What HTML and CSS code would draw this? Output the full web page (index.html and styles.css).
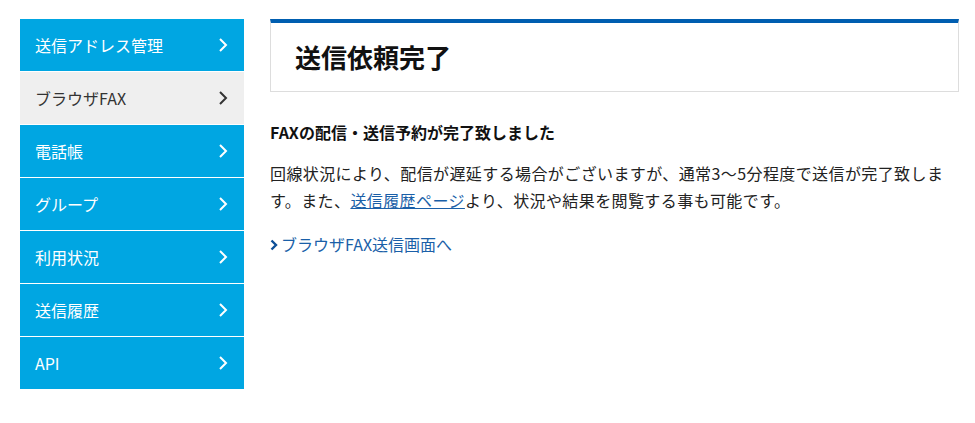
FILE: index.html
```html
<!DOCTYPE html>
<html lang="ja">
<head>
<meta charset="utf-8">
<title>送信依頼完了</title>
<link rel="stylesheet" href="styles.css">
</head>
<body>
<div class="page">
  <nav class="side">
    <a class="item" href="#"><span>送信アドレス管理</span><svg class="chev" viewBox="0 0 10 16" width="10" height="16"><path d="M2 2 L8 8 L2 14" /></svg></a>
    <a class="item active" href="#"><span>ブラウザFAX</span><svg class="chev" viewBox="0 0 10 16" width="10" height="16"><path d="M2 2 L8 8 L2 14" /></svg></a>
    <a class="item" href="#"><span>電話帳</span><svg class="chev" viewBox="0 0 10 16" width="10" height="16"><path d="M2 2 L8 8 L2 14" /></svg></a>
    <a class="item" href="#"><span>グループ</span><svg class="chev" viewBox="0 0 10 16" width="10" height="16"><path d="M2 2 L8 8 L2 14" /></svg></a>
    <a class="item" href="#"><span>利用状況</span><svg class="chev" viewBox="0 0 10 16" width="10" height="16"><path d="M2 2 L8 8 L2 14" /></svg></a>
    <a class="item" href="#"><span>送信履歴</span><svg class="chev" viewBox="0 0 10 16" width="10" height="16"><path d="M2 2 L8 8 L2 14" /></svg></a>
    <a class="item" href="#"><span>API</span><svg class="chev" viewBox="0 0 10 16" width="10" height="16"><path d="M2 2 L8 8 L2 14" /></svg></a>
  </nav>
  <main class="main">
    <div class="title-box"><h1>送信依頼完了</h1></div>
    <h2 class="sub">FAXの配信・送信予約が完了致しました</h2>
    <p class="body">回線状況により、配信が遅延する場合がございますが、通常3～5分程度で送信が完了致します。また、<a href="#" class="inline">送信履歴ページ</a>より、状況や結果を閲覧する事も可能です。</p>
    <a href="#" class="back"><svg class="lchev" viewBox="0 0 8 12" width="8" height="12"><path d="M1.5 1.5 L6 6 L1.5 10.5" /></svg>ブラウザFAX送信画面へ</a>
  </main>
</div>
</body>
</html>
```

FILE: styles.css
```css
html, body {
  margin: 0;
  padding: 0;
  background: #ffffff;
}
body {
  font-family: "Noto Sans CJK JP", "Noto Sans", sans-serif;
  color: #222222;
}
.page {
  display: flex;
  align-items: flex-start;
  padding: 19px 16px 0 20px;
  gap: 26px;
}
.side {
  width: 224px;
  flex: none;
  display: flex;
  flex-direction: column;
  gap: 1px;
}
.item {
  height: 52px;
  display: flex;
  align-items: center;
  justify-content: space-between;
  padding: 0 16px 0 15px;
  background: #00a6e2;
  color: #ffffff;
  font-size: 16px;
  text-decoration: none;
}
.item.active {
  background: #efefef;
  color: #333333;
}
.chev {
  display: block;
}
.chev path {
  fill: none;
  stroke: #ffffff;
  stroke-width: 2;
}
.item.active .chev path {
  stroke: #333333;
}
.main {
  flex: 1;
  min-width: 0;
}
.title-box {
  border: 1px solid #dddddd;
  border-top: 4px solid #005eb0;
  height: 68px;
  display: flex;
  align-items: center;
  padding: 0 24px;
}
.title-box h1 {
  margin: 0;
  font-size: 26px;
  font-weight: bold;
  color: #111111;
  line-height: 1;
}
.sub {
  margin: 28px 0 0 0;
  font-size: 16px;
  font-weight: bold;
  line-height: 24px;
  color: #111111;
}
.body {
  margin: 16px 0 0 0;
  max-width: 676px;
  font-size: 16px;
  line-height: 27px;
  letter-spacing: 0.4px;
  color: #222222;
}
.inline {
  color: #1a5fa8;
  text-decoration: underline;
}
.back {
  display: inline-flex;
  align-items: center;
  gap: 3px;
  margin-top: 17px;
  font-size: 16px;
  line-height: 27px;
  color: #1a5fa8;
  text-decoration: none;
}
.lchev path {
  fill: none;
  stroke: #0d4f98;
  stroke-width: 2.4;
}
```
